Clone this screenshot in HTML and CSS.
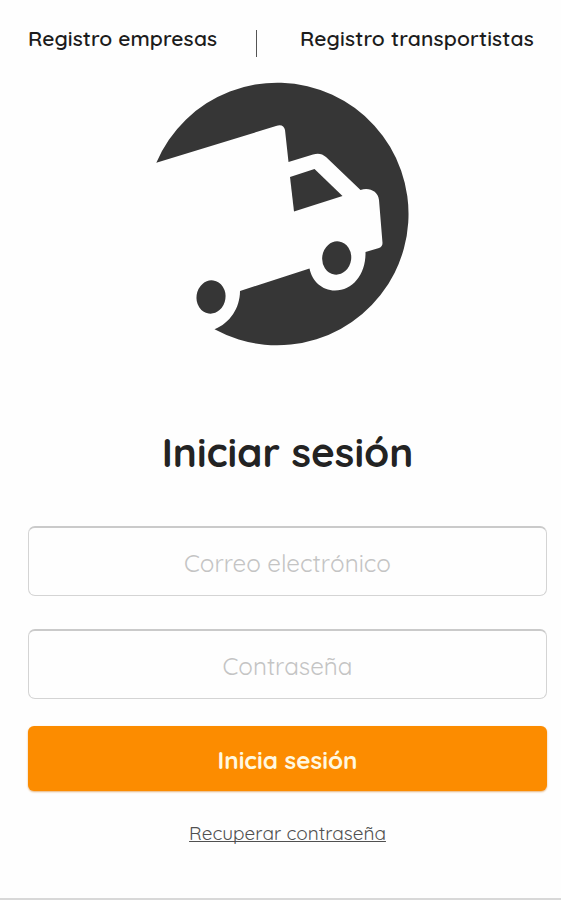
FILE: index.html
```html
<!DOCTYPE html>
<html lang="es">
<head>
<meta charset="utf-8">
<meta name="viewport" content="width=device-width, initial-scale=1">
<title>Iniciar sesión</title>
<link rel="stylesheet" href="styles.css">
</head>
<body>
<main class="screen">
  <nav class="register">
    <a class="register-link companies" href="#">Registro empresas</a>
    <span class="divider"></span>
    <a class="register-link carriers" href="#">Registro transportistas</a>
  </nav>
  <svg class="logo" viewBox="150 80 262 268" aria-hidden="true">
    <path d="M156.300 162.800 L276 126 Q283.500 123.500 285 130 L288.500 162 L313 154.500 Q320.500 152 326 157 L360.500 190 C369 187 378 191 379 200 L382.500 243 Q382.500 246.500 379 248 L365.500 252 C366 274 353 290.500 335 290.500 C322 290.500 312 281 309.500 268.500 L240 291 C240 308 230 323 214.500 329.300 A131.300 131.300 0 1 0 156.300 162.800 Z"/>
    <path d="M290 177 L314.500 169 L342.500 196 L294 211.500 Z"/>
    <ellipse cx="336.700" cy="258" rx="14.500" ry="16.700" transform="rotate(8 336.700 258)"/>
    <ellipse cx="211" cy="297" rx="14.500" ry="16.700" transform="rotate(8 211 297)"/>
  </svg>
  <h1 class="title"><span>Iniciar sesión</span></h1>
  <form class="form">
    <label class="field email"><span>Correo electrónico</span></label>
    <label class="field password"><span>Contraseña</span></label>
    <button class="submit" type="button"><span>Inicia sesión</span></button>
  </form>
  <a class="recover" href="#">Recuperar contraseña</a>
</main>
</body>
</html>
```
FILE: styles.css
```css
* { box-sizing: border-box; }
body {
  margin: 0;
  background: #fefefe;
  font-family: Quicksand, Inter, sans-serif;
  font-feature-settings: "cv11";
}
a { color: inherit; text-decoration: none; }
.screen {
  height: 900px;
  padding: 25px 14px 0 28px;
  display: flex;
  flex-direction: column;
  border-bottom: 2px solid #d8d8d8;
}
.register {
  display: flex;
  height: 32px;
  font-size: 21px;
  font-weight: 600;
  line-height: 26px;
  color: #1c1c1c;
  white-space: nowrap;
}
.companies { width: 228px; letter-spacing: 0.06px; }
.carriers { margin-left: 43px; letter-spacing: 0.14px; }
.divider { width: 1px; height: 27px; margin-top: 5px; background: #555; }
.logo {
  width: 262px;
  height: 268px;
  margin: 23px 0 0 122px;
  flex: none;
  fill: #363636;
}
.title {
  margin: 77px 0 0;
  height: 54px;
  text-align: center;
  font-size: 40.5px;
  font-weight: 700;
  line-height: 54px;
  color: #232323;
}
.form { display: flex; flex-direction: column; margin-top: 47px; }
.field {
  display: flex;
  align-items: center;
  justify-content: center;
  height: 70px;
  margin-bottom: 33px;
  padding-top: 2px;
  border: 1px solid #d4d4d4;
  border-top: 2px solid #cacaca;
  border-radius: 7px;
  font-size: 24.2px;
  font-weight: 400;
  color: #c4c4c4;
}
.password { margin-bottom: 27px; }
.submit {
  height: 65px;
  padding: 2px 0 0;
  border: 0;
  border-radius: 6px;
  background: #fc8c00;
  box-shadow: 0 1px 2px #e5b27a;
  color: #fff8e0;
  font: inherit;
  font-feature-settings: inherit;
  font-size: 24.2px;
  font-weight: 700;
}
.recover {
  align-self: center;
  margin-top: 31px;
  font-size: 19px;
  font-weight: 400;
  line-height: 22px;
  color: #505050;
  text-decoration: underline;
  text-decoration-thickness: 1px;
  text-underline-offset: 1px;
  text-decoration-skip-ink: none;
}
```
